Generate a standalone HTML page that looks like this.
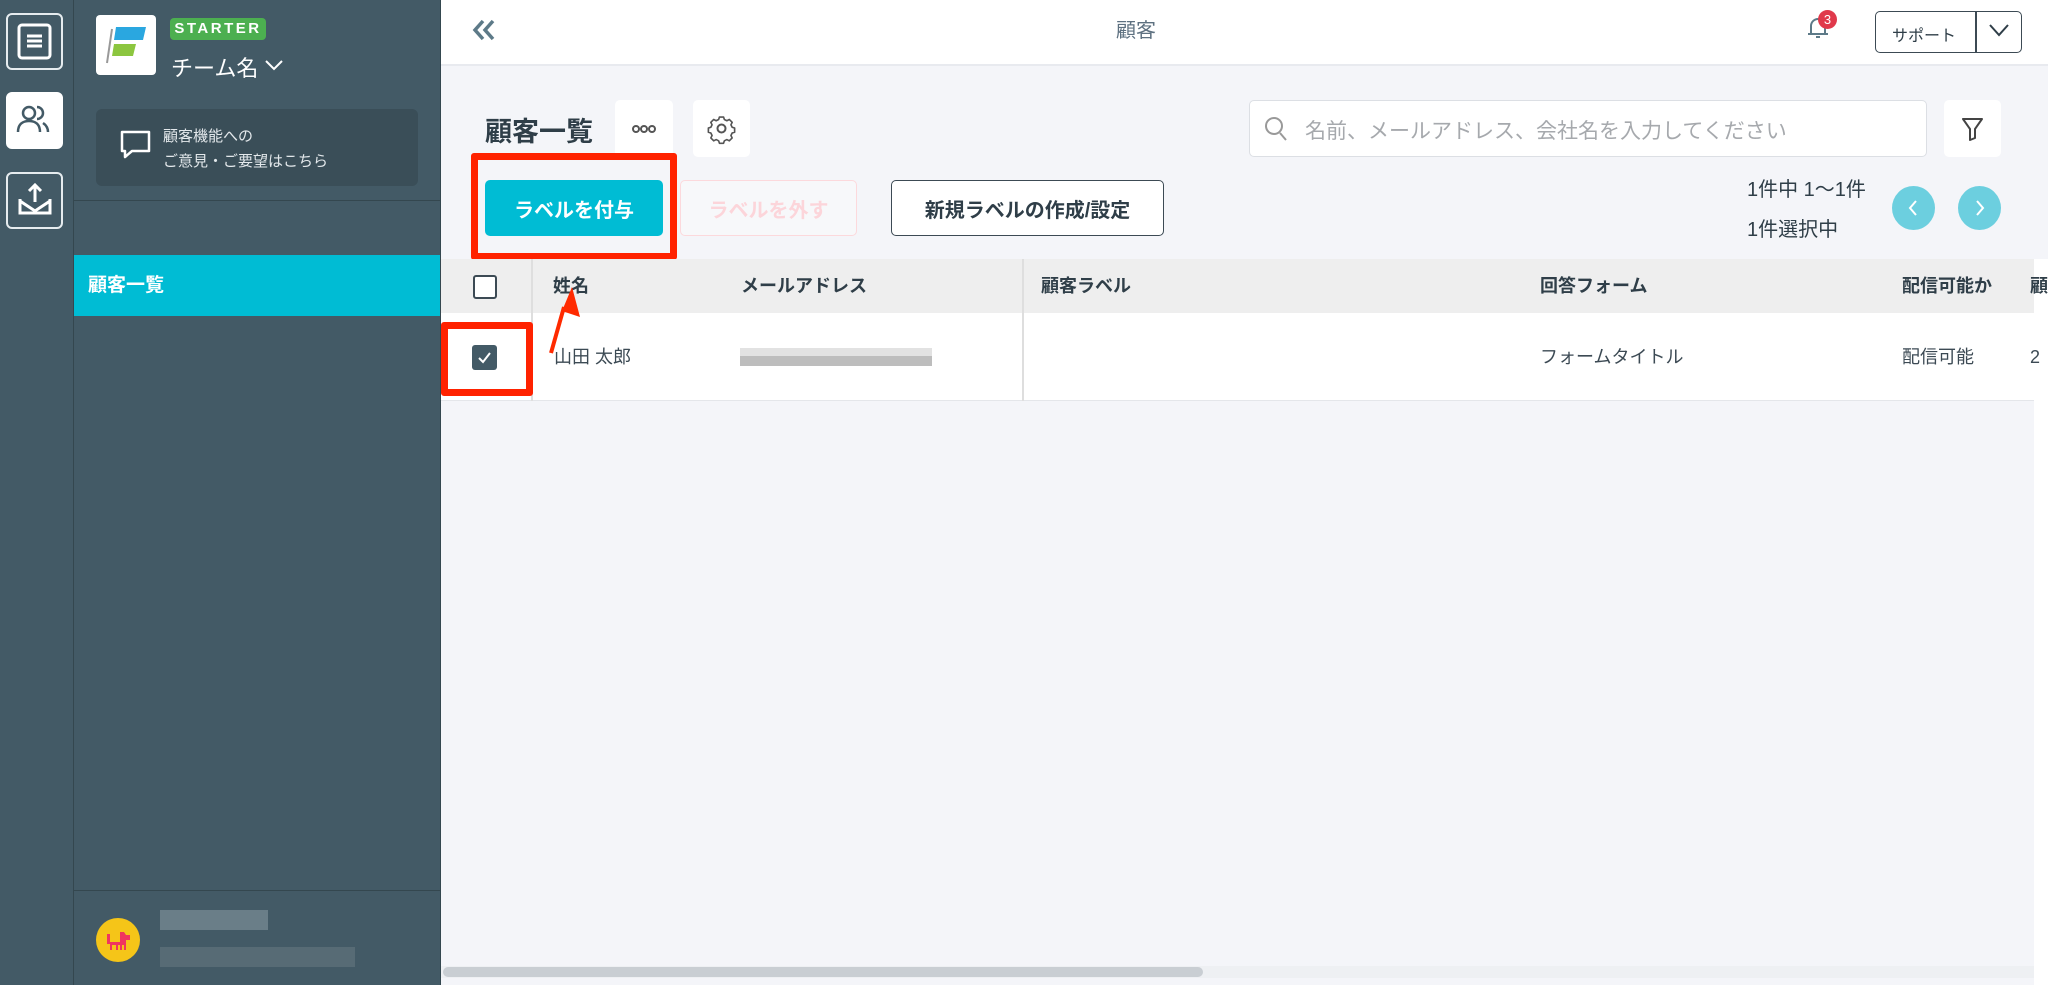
<!DOCTYPE html>
<html><head><meta charset="utf-8"><style>
*{box-sizing:border-box;margin:0;padding:0}
body{width:2048px;height:985px;position:relative;overflow:hidden;background:#f4f5f9;font-family:"Liberation Sans","Noto Sans CJK JP",sans-serif;color:#2f3e48}
.a{position:absolute}
.rail{left:0;top:0;width:74px;height:985px;background:#435a66;border-right:1px solid #34474f}
.side{left:74px;top:0;width:367px;height:985px;background:#435a66;border-right:1px solid #34474f}
.ib{left:6px;width:57px;height:57px;border:2px solid #e6ecef;border-radius:6px}
.btn{border-radius:5px;font-size:20px;font-weight:bold;display:flex;align-items:center;justify-content:center}
.th{top:259px;height:54px;line-height:54px;font-size:18px;font-weight:bold;color:#2f3e48}
.td{top:313px;height:88px;line-height:88px;font-size:18px;color:#3c4a54}
</style></head><body>
<div class="a rail"></div>
<div class="a ib" style="top:13px"><svg width="53" height="53" viewBox="0 0 53 53"><rect x="11" y="10" width="31" height="33" rx="3" fill="none" stroke="#fff" stroke-width="3"/><path d="M19 21h15M19 26h15M19 31h15" stroke="#fff" stroke-width="3"/></svg></div>
<div class="a ib" style="top:92px;background:#fff;border-color:#fff"><svg width="53" height="53" viewBox="0 0 53 53"><circle cx="21" cy="19" r="6" fill="none" stroke="#435a66" stroke-width="2.5"/><path d="M10 38c0-8 5-11 11-11s11 3 11 11M29 13a6 6 0 0 1 0 12M35 29c3 2 5 5 5 9" fill="none" stroke="#435a66" stroke-width="2.5"/></svg></div>
<div class="a ib" style="top:172px"><svg width="53" height="53" viewBox="0 0 53 53"><path d="M12 25v14h30V25M12 27l15 10 15-10M27 11v17M21 17l6-6 6 6" fill="none" stroke="#fff" stroke-width="3"/></svg></div>
<div class="a side"></div>
<div class="a" style="left:96px;top:15px;width:60px;height:60px;background:#fff;border-radius:4px"><svg width="60" height="60" viewBox="0 0 60 60"><path d="M16 14l-5 34" stroke="#999" stroke-width="2"/><path d="M20 12h30l-3 13H18z" fill="#2aa7e0"/><path d="M18 29h22l-3 12H16z" fill="#8cc63f"/></svg></div>
<div class="a" style="left:170px;top:18px;width:96px;height:22px;background:#4caf50;border-radius:4px;color:#fff;font-size:15px;font-weight:bold;letter-spacing:2.5px;text-align:center;line-height:22px">STARTER</div>
<div class="a" style="left:171px;top:51px;color:#fff;font-size:22px">チーム名</div>
<svg class="a" style="left:264px;top:58px" width="20" height="14" viewBox="0 0 20 14"><path d="M2 3l8 8 8-8" fill="none" stroke="#fff" stroke-width="2"/></svg>
<div class="a" style="left:96px;top:109px;width:322px;height:77px;background:#3a4e58;border-radius:6px"></div>
<svg class="a" style="left:118px;top:128px" width="34" height="34" viewBox="0 0 34 34"><path d="M4 4h27v19H14l-7 6v-6H4z" fill="none" stroke="#fff" stroke-width="2.5" stroke-linejoin="round"/></svg>
<div class="a" style="left:163px;top:124px;color:#e3e8eb;font-size:15px;line-height:25px">顧客機能への<br>ご意見・ご要望はこちら</div>
<div class="a" style="left:74px;top:200px;width:367px;height:1px;background:#34474f"></div>
<div class="a" style="left:74px;top:255px;width:366px;height:61px;background:#00bcd4;color:#fff;font-size:19px;font-weight:bold;line-height:61px;padding-left:14px">顧客一覧</div>
<div class="a" style="left:74px;top:890px;width:367px;height:1px;background:#34474f"></div>
<div class="a" style="left:96px;top:918px;width:44px;height:44px;border-radius:50%;background:#f5c518"></div>
<svg class="a" style="left:104px;top:926px" width="30" height="28" viewBox="0 0 30 28"><path d="M3 8h3v8h10V6h4l2 3h4v5h-4v10h-2v-5h-2v5h-2v-5h-2v5h-2v-5H8v5H6v-6H3z" fill="#f0365f"/></svg>
<div class="a" style="left:160px;top:910px;width:108px;height:20px;background:#6a7e88"></div>
<div class="a" style="left:160px;top:947px;width:195px;height:20px;background:#576b75"></div>
<!-- header -->
<div class="a" style="left:441px;top:0;width:1607px;height:66px;background:#fff;border-bottom:2px solid #e8eaef"></div>
<svg class="a" style="left:470px;top:18px" width="28" height="24" viewBox="0 0 28 24"><path d="M13 3l-8 9 8 9M23 3l-8 9 8 9" fill="none" stroke="#5d7a88" stroke-width="3.5"/></svg>
<div class="a" style="left:1116px;top:14px;font-size:20px;color:#5d7080">顧客</div>
<svg class="a" style="left:1804px;top:12px" width="30" height="30" viewBox="0 0 30 30"><path d="M7 22V14a7 7 0 0 1 14 0v8zM4 22h20M12 25h4" fill="none" stroke="#5d7a88" stroke-width="2"/></svg>
<div class="a" style="left:1818px;top:10px;width:19px;height:19px;border-radius:50%;background:#e0394b;color:#fff;font-size:13px;text-align:center;line-height:19px">3</div>
<div class="a" style="left:1875px;top:11px;width:147px;height:42px;border:1.5px solid #3c4a54;border-radius:5px;background:#fff"></div>
<div class="a" style="left:1975px;top:11px;width:1.5px;height:42px;background:#3c4a54"></div>
<div class="a" style="left:1892px;top:22px;font-size:16px">サポート</div>
<svg class="a" style="left:1987px;top:22px" width="24" height="16" viewBox="0 0 24 16"><path d="M3 3l9 10 9-10" fill="none" stroke="#2f3e48" stroke-width="2"/></svg>
<!-- toolbar -->
<div class="a" style="left:485px;top:110px;font-size:27px;font-weight:bold">顧客一覧</div>
<div class="a" style="left:615px;top:100px;width:58px;height:57px;background:#fff;border-radius:5px"><svg width="58" height="57" viewBox="0 0 58 57"><circle cx="21" cy="29" r="3" fill="none" stroke="#555" stroke-width="2"/><circle cx="29" cy="29" r="3" fill="none" stroke="#555" stroke-width="2"/><circle cx="37" cy="29" r="3" fill="none" stroke="#555" stroke-width="2"/></svg></div>
<div class="a" style="left:693px;top:100px;width:57px;height:57px;background:#fff;border-radius:5px"><svg width="57" height="57" viewBox="0 0 57 57"><circle cx="28.5" cy="28.5" r="4" fill="none" stroke="#555" stroke-width="2"/><path d="M26 16h5l1 3 3 1.5 3-1.5 3.5 3.5-1.5 3 1.5 3 3 1v5l-3 1-1.5 3 1.5 3-3.5 3.5-3-1.5-3 1.5-1 3h-5l-1-3-3-1.5-3 1.5-3.5-3.5 1.5-3-1.5-3-3-1v-5l3-1 1.5-3-1.5-3 3.5-3.5 3 1.5 3-1.5z" fill="none" stroke="#555" stroke-width="2" stroke-linejoin="round" transform="translate(28.5 28.5) scale(.82) translate(-28.5 -30)"/></svg></div>
<div class="a" style="left:471px;top:153px;width:206px;height:107px;border:7px solid #ff2200;border-radius:3px"></div>
<div class="a btn" style="left:485px;top:180px;width:178px;height:56px;background:#00bcd4;color:#fff">ラベルを付与</div>
<div class="a btn" style="left:680px;top:180px;width:177px;height:56px;border:1.5px solid #fcd9dc;color:#fcd5da;background:#f7f8fa">ラベルを外す</div>
<div class="a btn" style="left:891px;top:180px;width:273px;height:56px;border:1.5px solid #3c4a54;background:#fff;color:#2f3e48">新規ラベルの作成/設定</div>
<div class="a" style="left:1249px;top:100px;width:678px;height:57px;background:#fff;border:1.5px solid #dcdfe4;border-radius:5px"></div>
<svg class="a" style="left:1263px;top:115px" width="26" height="28" viewBox="0 0 26 28"><circle cx="11" cy="11" r="8" fill="none" stroke="#999" stroke-width="2"/><path d="M17 18l6 7" stroke="#999" stroke-width="2"/></svg>
<div class="a" style="left:1305px;top:115px;font-size:21px;color:#a6a9ad">名前、メールアドレス、会社名を入力してください</div>
<div class="a" style="left:1944px;top:100px;width:57px;height:57px;background:#fff;border-radius:5px"><svg width="57" height="57" viewBox="0 0 57 57"><path d="M19 19h19l-7 10v9l-5 2V29z" fill="none" stroke="#444" stroke-width="2" stroke-linejoin="round"/></svg></div>
<div class="a" style="left:1747px;top:170px;font-size:20px;line-height:40px">1件中 1〜1件<br>1件選択中</div>
<div class="a" style="left:1892px;top:186px;width:43px;height:44px;border-radius:50%;background:#6ccfdf"><svg width="43" height="44" viewBox="0 0 43 44"><path d="M24 15l-6 7 6 7" fill="none" stroke="#fff" stroke-width="2"/></svg></div>
<div class="a" style="left:1958px;top:186px;width:43px;height:44px;border-radius:50%;background:#6ccfdf"><svg width="43" height="44" viewBox="0 0 43 44"><path d="M19 15l6 7-6 7" fill="none" stroke="#fff" stroke-width="2"/></svg></div>
<!-- table -->
<div class="a" style="left:441px;top:259px;width:1593px;height:54px;background:#eeeeee"></div>
<div class="a" style="left:441px;top:313px;width:1593px;height:88px;background:#fff;border-bottom:1.5px solid #e4e6ea"></div>
<div class="a" style="left:2034px;top:259px;width:14px;height:726px;background:#fff"></div>
<div class="a" style="left:531px;top:259px;width:2px;height:142px;background:#dedede"></div>
<div class="a" style="left:1022px;top:259px;width:2px;height:142px;background:#dedede"></div>
<div class="a" style="left:473px;top:275px;width:24px;height:24px;border:2.5px solid #3c4a54;border-radius:3px;background:#fff"></div>
<div class="a th" style="left:553px">姓名</div>
<div class="a th" style="left:741px">メールアドレス</div>
<div class="a th" style="left:1041px">顧客ラベル</div>
<div class="a th" style="left:1540px">回答フォーム</div>
<div class="a th" style="left:1902px">配信可能か</div>
<div class="a th" style="left:2030px">顧</div>
<div class="a" style="left:441px;top:322px;width:92px;height:74px;border:7px solid #ff2200;border-radius:3px"></div>
<div class="a" style="left:472px;top:345px;width:25px;height:25px;background:#435a66;border-radius:3px"><svg width="25" height="25" viewBox="0 0 25 25"><path d="M7 13l4 4 7-9" fill="none" stroke="#fff" stroke-width="2"/></svg></div>
<svg class="a" style="left:548px;top:285px" width="36" height="70" viewBox="0 0 36 70"><path d="M3 68L16 22" stroke="#ff2a00" stroke-width="4"/><path d="M24 2l8 30-18-6z" fill="#ff2a00"/></svg>
<div class="a td" style="left:554px">山田 太郎</div>
<div class="a" style="left:740px;top:348px;width:192px;height:8px;background:#e2e2e2"></div>
<div class="a" style="left:740px;top:356px;width:192px;height:10px;background:#bdbdbd"></div>
<div class="a td" style="left:1540px">フォームタイトル</div>
<div class="a td" style="left:1902px">配信可能</div>
<div class="a td" style="left:2030px">2</div>
<div class="a" style="left:441px;top:966px;width:1593px;height:12px;background:#eef0f3"></div>
<div class="a" style="left:443px;top:967px;width:760px;height:10px;background:#c9ced3;border-radius:5px"></div>
</body></html>
